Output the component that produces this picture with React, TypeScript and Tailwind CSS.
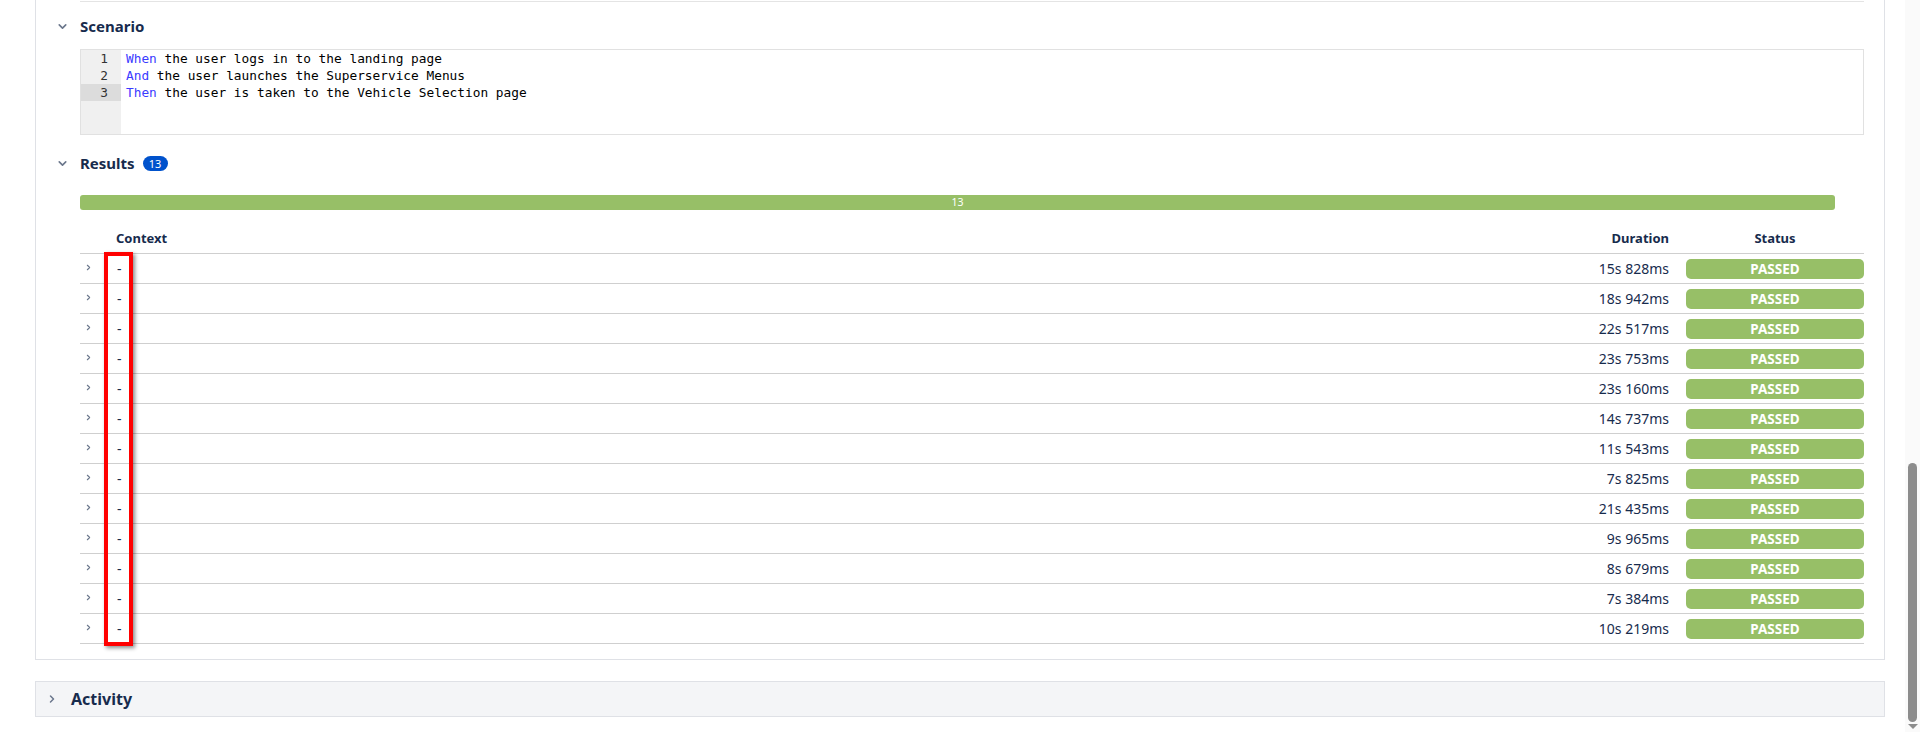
import { ChevronDown, ChevronRight } from "lucide-react";

const results = [
  "15s 828ms",
  "18s 942ms",
  "22s 517ms",
  "23s 753ms",
  "23s 160ms",
  "14s 737ms",
  "11s 543ms",
  "7s 825ms",
  "21s 435ms",
  "9s 965ms",
  "8s 679ms",
  "7s 384ms",
  "10s 219ms",
];

const steps = [
  { kw: "When", text: " the user logs in to the landing page" },
  { kw: "And", text: " the user launches the Superservice Menus" },
  { kw: "Then", text: " the user is taken to the Vehicle Selection page" },
];

function SectionTitle({ title, children }: { title: string; children?: React.ReactNode }) {
  return (
    <div className="flex items-center h-[24px]">
      <div className="w-[25px] flex items-center justify-start pl-[1px]">
        <ChevronDown size={13} strokeWidth={3} className="text-[#6b778c]" />
      </div>
      <span className="text-[15px] font-bold text-[#172b4d]">{title}</span>
      {children}
    </div>
  );
}

function Scrollbar() {
  return (
    <div className="w-[15px] h-full bg-[#fafafa] flex flex-col items-center">
      <div className="h-[463px]" />
      <div className="w-[9px] h-[259px] rounded-full bg-[#8c8c8c]" />
      <div className="mt-[2px] w-0 h-0 border-l-[5px] border-r-[5px] border-t-[5px] border-l-transparent border-r-transparent border-t-[#8c8c8c]" />
    </div>
  );
}

export default function App() {
  return (
    <div className="flex h-[732px] w-[1920px] overflow-hidden bg-white font-['Noto_Sans',sans-serif] text-[#172b4d]">
      <div className="flex-1">
        <div className="ml-[35px] w-[1850px] border-x border-b border-[#dfe1e6] pl-[19px] pr-[20px] pb-[15px]">
          {/* bottom edge of the block above */}
          <div className="ml-[25px] h-[2px] border-b border-[#e4e4e4]" />

          {/* Scenario */}
          <div className="mt-[12px]">
            <SectionTitle title="Scenario" />
          </div>
          <div className="ml-[25px] mt-[11px] h-[86px] border border-[#e1e1e1] flex">
            <div className="w-[40px] bg-[#f0f0f0] flex flex-col">
              {steps.map((s, i) => (
                <div
                  key={s.kw}
                  className={
                    i === 2
                      ? "h-[17px] pr-[13px] text-right bg-[#dcdcdc] font-['DejaVu_Sans_Mono',monospace] text-[12.8px] leading-[17px] text-[#333]"
                      : "h-[17px] pr-[13px] text-right font-['DejaVu_Sans_Mono',monospace] text-[12.8px] leading-[17px] text-[#333]"
                  }
                >
                  {i + 1}
                </div>
              ))}
            </div>
            <div className="flex-1 pl-[5px] flex flex-col">
              {steps.map((s) => (
                <div
                  key={s.kw}
                  className="h-[17px] font-['DejaVu_Sans_Mono',monospace] text-[12.8px] leading-[17px] text-black whitespace-pre"
                >
                  <span className="text-[#3b3bff]">{s.kw}</span>
                  {s.text}
                </div>
              ))}
            </div>
          </div>

          {/* Results */}
          <div className="mt-[16px]">
            <SectionTitle title="Results">
              <span className="ml-[8px] h-[15px] w-[25px] rounded-full bg-[#0052cc] text-white text-[11px] leading-[15px] text-center">
                13
              </span>
            </SectionTitle>
          </div>

          <div className="ml-[25px] mt-[20px] mr-[29px] h-[15px] rounded-[3px] bg-[#97bf67] text-white text-[10.5px] leading-[15px] text-center">
            13
          </div>

          <div className="relative ml-[25px] mt-[15px]">
            <div className="flex items-center h-[29px] border-b border-[#cfcfcf] text-[13px] font-bold text-[#172b4d]">
              <div className="w-[26px]" />
              <div className="flex-1 pl-[10px]">Context</div>
              <div className="w-[120px] pr-[7px] text-right">Duration</div>
              <div className="w-[188px] pl-[10px] text-center">Status</div>
            </div>
            {results.map((d, i) => (
              <div key={i} className="flex items-center h-[30px] border-b border-[#cfcfcf] text-[14px]">
                <div className="w-[26px] flex justify-start pl-[4px] -mt-[3px]">
                  <ChevronRight size={9} strokeWidth={3} className="text-[#6b778c]" />
                </div>
                <div className="flex-1 pl-[11px]">-</div>
                <div className="w-[120px] pr-[7px] text-right">{d}</div>
                <div className="w-[188px] pl-[10px]">
                  <div className="h-[20px] rounded-[5px] bg-[#97bf67] text-white text-[13.5px] font-bold leading-[20px] text-center">
                    PASSED
                  </div>
                </div>
              </div>
            ))}
            {/* highlight annotation */}
            <div className="absolute left-[24px] top-[27px] w-[29px] h-[394px] border-[4px] border-[#ff0000] shadow-[2px_2px_4px_rgba(0,0,0,0.45)]" />
          </div>
        </div>

        {/* Activity */}
        <div className="ml-[35px] mt-[21px] w-[1850px] h-[36px] border border-[#dfe1e6] bg-[#f4f5f7] flex items-center">
          <div className="w-[35px] flex justify-end pr-[13px]">
            <ChevronRight size={12} strokeWidth={3} className="text-[#6b778c]" />
          </div>
          <span className="text-[16px] font-bold text-[#172b4d]">Activity</span>
        </div>
      </div>
      <Scrollbar />
    </div>
  );
}
